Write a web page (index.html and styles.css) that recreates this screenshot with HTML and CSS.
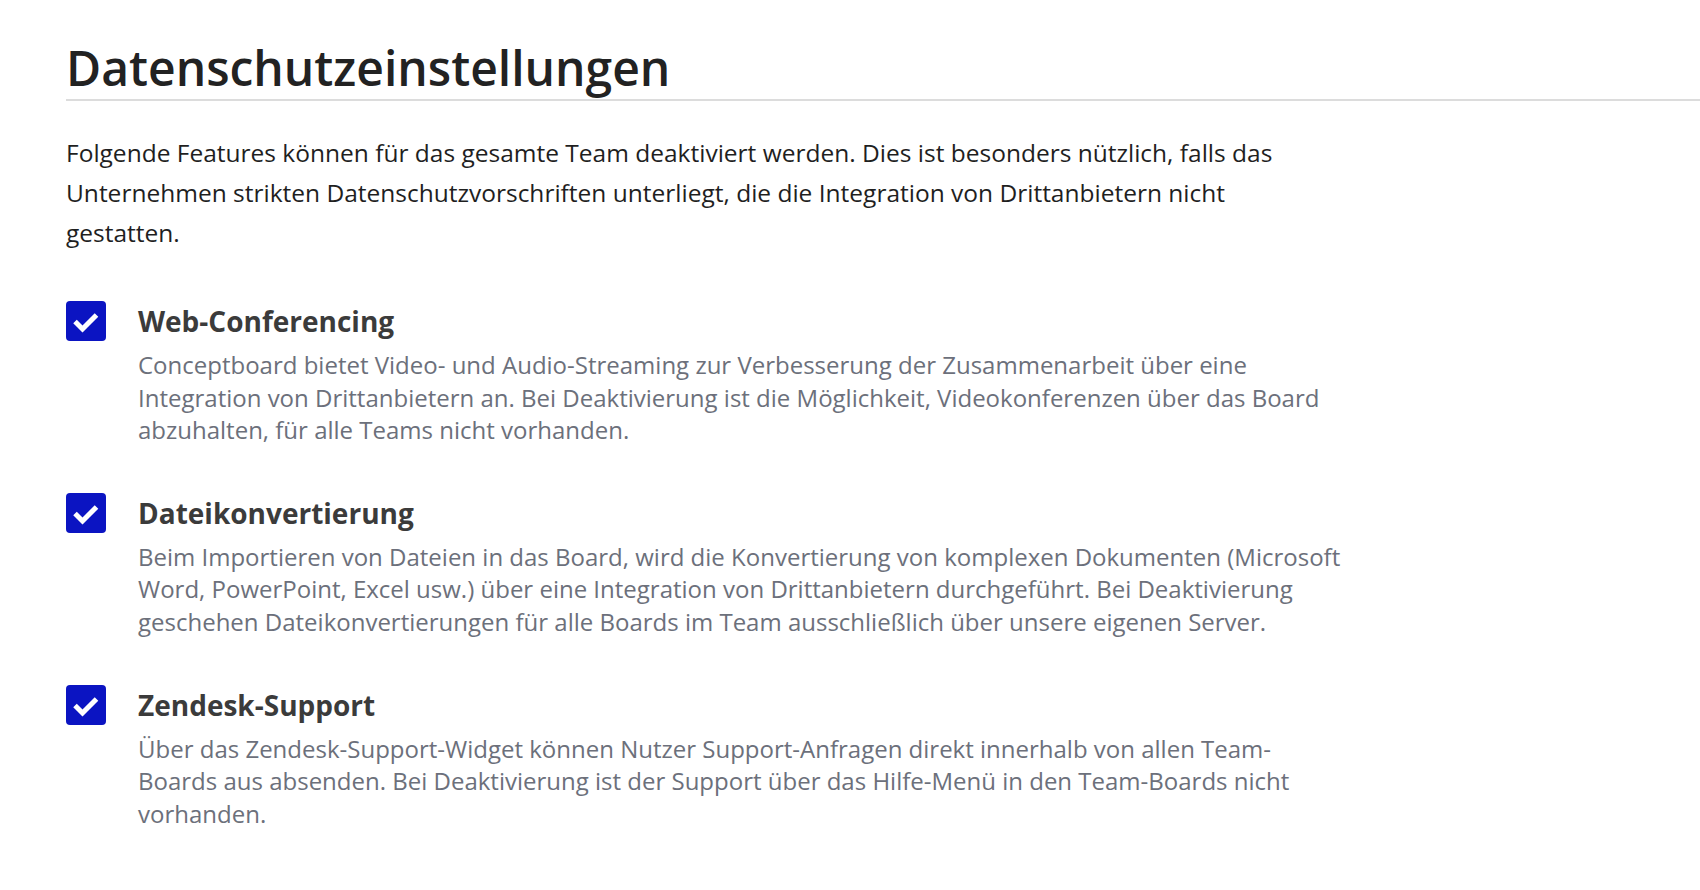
FILE: index.html
```html
<!DOCTYPE html>
<html lang="de">
<head>
    <meta charset="UTF-8">
    <meta name="viewport" content="width=device-width, initial-scale=1.0">
    <title>Datenschutzeinstellungen</title>
    <link rel="stylesheet" href="styles.css">
</head>
<body>
    <div class="privacy-page">
        <h1 class="privacy-title">Datenschutzeinstellungen</h1>

        <p class="privacy-intro">Folgende Features können für das gesamte Team deaktiviert werden. Dies ist besonders nützlich, falls das Unternehmen strikten Datenschutzvorschriften unterliegt, die die Integration von Drittanbietern nicht gestatten.</p>

        <div class="feature-list">
            <!-- Web-Conferencing -->
            <label class="feature">
                <span class="feature-check">
                    <svg viewBox="0 0 40 40"><path d="M9 20.5 L16.5 28 L30.5 14"></path></svg>
                </span>
                <span class="feature-body">
                    <span class="feature-name">Web-Conferencing</span>
                    <span class="feature-desc">Conceptboard bietet Video- und Audio-Streaming zur Verbesserung der Zusammenarbeit über eine Integration von Drittanbietern an. Bei Deaktivierung ist die Möglichkeit, Videokonferenzen über das Board abzuhalten, für alle Teams nicht vorhanden.</span>
                </span>
            </label>

            <!-- Dateikonvertierung -->
            <label class="feature">
                <span class="feature-check">
                    <svg viewBox="0 0 40 40"><path d="M9 20.5 L16.5 28 L30.5 14"></path></svg>
                </span>
                <span class="feature-body">
                    <span class="feature-name">Dateikonvertierung</span>
                    <span class="feature-desc">Beim Importieren von Dateien in das Board, wird die Konvertierung von komplexen Dokumenten (Microsoft Word, PowerPoint, Excel usw.) über eine Integration von Drittanbietern durchgeführt. Bei Deaktivierung geschehen Dateikonvertierungen für alle Boards im Team ausschließlich über unsere eigenen Server.</span>
                </span>
            </label>

            <!-- Zendesk-Support -->
            <label class="feature">
                <span class="feature-check">
                    <svg viewBox="0 0 40 40"><path d="M9 20.5 L16.5 28 L30.5 14"></path></svg>
                </span>
                <span class="feature-body">
                    <span class="feature-name">Zendesk-Support</span>
                    <span class="feature-desc">Über das Zendesk-Support-Widget können Nutzer Support-Anfragen direkt innerhalb von allen Team-Boards aus absenden. Bei Deaktivierung ist der Support über das Hilfe-Menü in den Team-Boards nicht vorhanden.</span>
                </span>
            </label>
        </div>
    </div>
</body>
</html>
```

FILE: styles.css
```css
body {
    margin: 0;
    background: #fff;
    font-family: "Open Sans", "Noto Sans", sans-serif;
}

.privacy-page {
    padding: 37px 0 40px 66px;
}

.privacy-title {
    margin: 0;
    padding-bottom: 1px;
    font-size: 48px;
    font-weight: 600;
    line-height: 61px;
    color: #222;
    border-bottom: 2px solid #dcdcdc;
}

.privacy-intro {
    max-width: 1240px;
    margin: 32px 0 0;
    font-size: 24.5px;
    line-height: 40px;
    color: #1f1f1f;
}

.feature-list {
    display: flex;
    flex-direction: column;
    gap: 46px;
    margin-top: 48px;
}

.feature {
    display: flex;
    gap: 32px;
    cursor: pointer;
}

.feature-check {
    flex: none;
    width: 40px;
    height: 40px;
    border-radius: 4px;
    background: #0b14c2;
}

.feature-check svg {
    display: block;
    width: 40px;
    height: 40px;
}

.feature-check path {
    fill: none;
    stroke: #fff;
    stroke-width: 5;
}

.feature-body {
    display: flex;
    flex-direction: column;
    max-width: 1208px;
}

.feature-name {
    font-size: 28px;
    font-weight: 700;
    line-height: 40px;
    color: #3b3b3b;
}

.feature-desc {
    margin-top: 8px;
    font-size: 24px;
    line-height: 32.6px;
    color: #6c707b;
}
```
